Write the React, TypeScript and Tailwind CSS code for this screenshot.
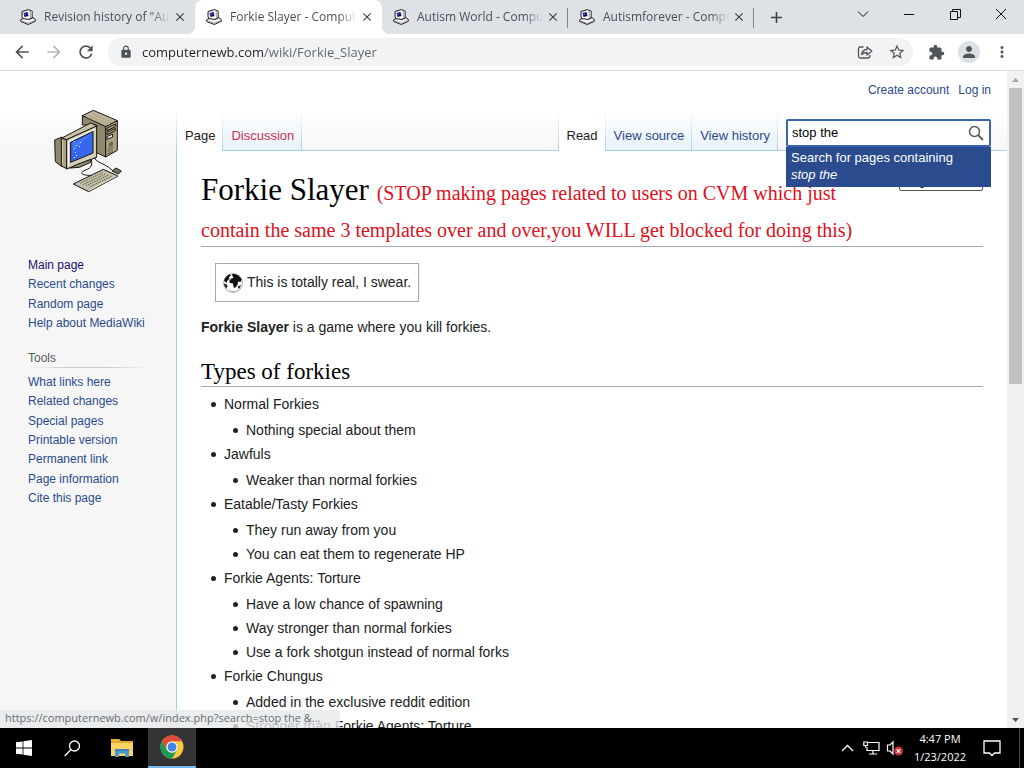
import React, { useState } from "react";
import {
  MdArrowBack,
  MdArrowForward,
  MdRefresh,
  MdLock,
  MdStarBorder,
  MdExtension,
  MdPerson,
  MdMoreVert,
  MdClose,
  MdAdd,
} from "react-icons/md";

function Favicon() {
  return (
    <svg width="16" height="16" viewBox="0 0 16 16" className="shrink-0" aria-hidden="true">
      <path d="M2 2.500L8.500.6l4 1.700v6l2.800 2.200v1.800l-7 3.200L.7 12.500v-1.700L3 9.500l-1-1.500z" fill="#f4f4f4" stroke="#1a1a1a" strokeWidth="1" strokeLinejoin="round" />
      <path d="M9.500 1.500l3 1v6l-2.500 1z" fill="#b4b4b4" />
      <path d="M3.500 4l4-1 1 4L4.500 8z" fill="#12126e" />
      <path d="M4.500 4.500H6v1.300H4.500z" fill="#6d74e0" />
      <path d="M2.500 9.500l6.500 1 4-2" fill="none" stroke="#222" strokeWidth="1.200" />
      <path d="M1.500 11.500L8.300 14l6.200-2.800v1.200l-6.200 2.700-6.800-2.600z" fill="#8e8e8e" />
    </svg>
  );
}

function BrowserTab({ title, active, divider }: { title: string; active?: boolean; divider?: boolean }) {
  return (
    <div
      className={
        active
          ? "relative flex h-full w-[187px] items-center rounded-t-lg bg-white pl-[11px] pr-[7px]"
          : "relative flex h-full w-[186px] items-center pl-[11px] pr-[7px]"
      }
    >
      {active && (
        <>
          <span className="absolute bottom-0 -left-2 size-2 bg-[radial-gradient(circle_at_0_0,transparent_8px,#fff_8px)]" />
          <span className="absolute bottom-0 -right-2 size-2 bg-[radial-gradient(circle_at_100%_0,transparent_8px,#fff_8px)]" />
        </>
      )}
      <Favicon />
      <span className="ml-2 flex-1 overflow-hidden whitespace-nowrap text-[12px] leading-4 text-[#4b4f54] [mask-image:linear-gradient(to_right,#000_85%,transparent)]">
        {title}
      </span>
      <button type="button" aria-label={"Close " + title} className="ml-0.5 flex size-4 items-center justify-center text-[#3c4043]">
        <MdClose size={14} />
      </button>
      {divider && <span className="absolute right-0 top-2 h-5 w-px bg-[#808387]" />}
    </div>
  );
}

function TabStrip() {
  return (
    <div className="flex h-[34px] items-stretch bg-[#dee1e6] pl-[9px]">
      <BrowserTab title={'Revision history of "Autism World"'} />
      <BrowserTab title="Forkie Slayer - Computernewb Wiki" active />
      <BrowserTab title="Autism World - Computernewb" divider />
      <BrowserTab title="Autismforever - Computernewb" divider />
      <button type="button" aria-label="New tab" className="ml-3 flex w-5 items-center justify-center text-[#3c4043]">
        <MdAdd size={19} />
      </button>
      <div className="ml-auto flex h-7 text-[#111]">
        <button type="button" aria-label="Search tabs" className="flex w-[46px] items-center justify-center">
          <svg width="12" height="8" viewBox="0 0 12 8" fill="none" stroke="currentColor"><path d="M1 1.500l5 5 5-5" /></svg>
        </button>
        <button type="button" aria-label="Minimize" className="flex w-[46px] items-center justify-center">
          <svg width="10" height="10" viewBox="0 0 10 10" fill="none" stroke="currentColor"><path d="M0 5.500h10" /></svg>
        </button>
        <button type="button" aria-label="Restore" className="flex w-[46px] items-center justify-center">
          <svg width="11" height="11" viewBox="0 0 11 11" fill="none" stroke="currentColor"><path d="M.5 2.500h7v8h-7zM2.500 2.500v-2h8v8h-3" /></svg>
        </button>
        <button type="button" aria-label="Close window" className="flex w-[46px] items-center justify-center">
          <svg width="12" height="12" viewBox="0 0 12 12" fill="none" stroke="currentColor"><path d="M1 1l10 10M11 1L1 11" /></svg>
        </button>
      </div>
    </div>
  );
}

function Toolbar() {
  const [url, setUrl] = useState("computernewb.com/wiki/Forkie_Slayer");
  return (
    <div className="flex h-[37px] items-center border-b border-[#d8dadd] bg-white px-3 text-[#505458]">
      <button type="button" aria-label="Back" className="flex w-5 justify-center"><MdArrowBack size={20} /></button>
      <button type="button" aria-label="Forward" className="ml-3 flex w-5 justify-center text-[#b4b6b9]"><MdArrowForward size={20} /></button>
      <button type="button" aria-label="Reload" className="ml-3 flex w-5 justify-center"><MdRefresh size={20} /></button>
      <div className="ml-3 flex h-7 flex-1 items-center rounded-full bg-[#f1f3f4] pl-[11px] pr-1.5">
        <MdLock size={14} />
        <input
          aria-label="Address and search bar"
          value={url}
          onChange={(e) => setUrl(e.target.value)}
          className="ml-[9px] min-w-0 flex-1 bg-[linear-gradient(to_right,#202124_121px,#5f6368_121px)] bg-clip-text text-[13px] leading-5 text-[#202124] outline-none [-webkit-text-fill-color:transparent]"
        />
        <button type="button" aria-label="Share" className="flex w-5 justify-center">
          <svg width="16" height="16" viewBox="0 0 16 16" fill="none" stroke="currentColor" strokeWidth="1.300" strokeLinejoin="round">
            <path d="M6.500 3H3.200A1.700 1.700 0 0 0 1.500 4.700v7.600A1.700 1.700 0 0 0 3.200 14h8a1.700 1.700 0 0 0 1.700-1.700V11" />
            <path d="M4.500 10.500C5 7.300 6.800 5.600 10 5.500V3l4.800 4-4.800 4V8.500c-2.500 0-4.200.6-5.500 2z" />
          </svg>
        </button>
        <button type="button" aria-label="Bookmark this page" className="ml-3 flex w-5 justify-center"><MdStarBorder size={18} /></button>
      </div>
      <button type="button" aria-label="Extensions" className="ml-[13px] flex w-5 justify-center"><MdExtension size={17} /></button>
      <button type="button" aria-label="Profile" className="ml-3 flex size-[22px] items-center justify-center rounded-full bg-[#dce0e5]"><MdPerson size={18} /></button>
      <button type="button" aria-label="Menu" className="ml-3 flex w-5 justify-center"><MdMoreVert size={18} /></button>
    </div>
  );
}

function WikiLogo() {
  const dots = [[132, 138], [138, 150], [132, 159], [135, 171], [147, 153], [138, 180], [132, 186], [150, 141]];
  return (
    <svg width="120" height="110" viewBox="0 0 360 330" role="img" aria-label="Computernewb Wiki">
      <g stroke="#17150f" strokeWidth="3" strokeLinejoin="round">
        <path d="M157 62L190 46L262 77L227 95z" fill="#bdb69a" />
        <path d="M157 62L227 95V186L198 172V90L157 90z" fill="#8f886c" />
        <path d="M227 95L262 77V166L227 186z" fill="#a8a184" />
        <path d="M74 135L96 126V215L76 200z" fill="#8f886b" />
        <path d="M94 130L182 84L202 93L110 134z" fill="#c9c2a6" />
        <path d="M94 130L110 134V221L94 213z" fill="#a8a183" />
        <path d="M110 134L200 93V187L110 222z" fill="#d3cdb6" />
        <path d="M122 142L189 109V174L122 202z" fill="#3568ed" />
        <path d="M120 219L140 209L180 194L182 202L148 217z" fill="#8f886b" />
        <path d="M130 267L220 223L264 243L176 290z" fill="#c4bfa8" />
        <path d="M246 228L258 219L274 228L265 237z" fill="#77736b" />
        <path d="M194 186C195 203 221 202 246 225M184 193C191 223 170 221 157 230C148 238 168 242 184 241" fill="none" />
      </g>
      <path d="M115 140L195 103M115 140V213" stroke="#fff" strokeWidth="3" fill="none" />
      <path d="M98 134V210" stroke="#d5ceb4" strokeWidth="3" />
      <path d="M128 145L180 120L128 170z" fill="#4f80f8" opacity=".6" />
      <path d="M169 66L236 96M178 62L245 92M189 57L251 85" stroke="#9d9679" strokeWidth="2" />
      <path d="M231 99L256 87V95L231 107zM231 112L256 100V107L231 119z" fill="#aaa489" stroke="#17150f" strokeWidth="3" />
      <path d="M231 125L248 117V126L231 133z" fill="#eee" stroke="#17150f" strokeWidth="3" />
      <path d="M238 145L247 141V150L238 154zM233 163L249 155M233 170L249 162M233 177L249 169" fill="#77715b" stroke="#625d49" strokeWidth="3" />
      <path d="M177 287L260 243" stroke="#fff9dc" strokeWidth="2" />
      <g stroke="#555142" strokeWidth="3" strokeDasharray="4 3">
        <path d="M151 265L219 232M159 269L229 235M168 272L238 239M178 276L246 243" />
      </g>
      {dots.map(([x, y]) => <rect key={x + "-" + y} x={x} y={y} width="3" height="3" fill="#dbe6ff" />)}
    </svg>
  );
}

const mainLinks = ["Main page", "Recent changes", "Random page", "Help about MediaWiki"];
const toolLinks = ["What links here", "Related changes", "Special pages", "Printable version", "Permanent link", "Page information", "Cite this page"];

function Sidebar() {
  return (
    <aside className="w-44 shrink-0 pt-6 text-[12px]">
      <a href="#main" className="ml-[30px] block"><WikiLogo /></a>
      <nav aria-label="Navigation" className="mt-[50px] pl-7">
        <ul className="grid h-[78px] auto-rows-fr items-center">
          {mainLinks.map((t, i) => (
            <li key={t} className="leading-4">
              <a href="#nav" className={i === 0 ? "text-[#21106b]" : "text-[#2a4b8d]"}>{t}</a>
            </li>
          ))}
        </ul>
      </nav>
      <nav aria-label="Tools" className="mt-[17px] pl-7">
        <h3 className="mr-7 leading-[17px] text-[#54595d]">Tools</h3>
        <div className="mr-7 h-px bg-[linear-gradient(to_right,transparent,#c8ccd1_33%,#c8ccd1_66%,transparent)]" />
        <ul className="mt-1 grid h-[136px] auto-rows-fr items-center">
          {toolLinks.map((t) => (
            <li key={t} className="leading-4"><a href="#tool" className="text-[#2a4b8d]">{t}</a></li>
          ))}
        </ul>
      </nav>
    </aside>
  );
}

function PageTab({ label, active, missing }: { label: string; active?: boolean; missing?: boolean }) {
  const base = "flex h-10 items-center border-r pl-2 pr-[7px] pt-3 [border-image:linear-gradient(to_bottom,#fff,#a9d0e2)_1] ";
  return (
    <li>
      <a
        href="#tab"
        className={
          base +
          (active
            ? "relative z-10 -mb-px h-[41px] bg-white pb-px text-[#202122]"
            : missing
              ? "bg-linear-to-b from-white to-[#e8f2f8] text-[#c9304f]"
              : "bg-linear-to-b from-white to-[#e8f2f8] text-[#2a4b8d]")
        }
      >
        {label}
      </a>
    </li>
  );
}

function SearchBox() {
  const [query, setQuery] = useState("stop the");
  return (
    <form className="relative mb-[3px] ml-2 mr-4 w-[205px]" onSubmit={(e) => e.preventDefault()}>
      <div className="flex h-7 items-center rounded-xs border-2 border-[#3a66b0] bg-white pl-1 pr-[5px]">
        <input
          aria-label="Search wiki"
          value={query}
          onChange={(e) => setQuery(e.target.value)}
          className="min-w-0 flex-1 text-[13px] text-black outline-none"
        />
        <button type="submit" aria-label="Search" className="text-[#54595d]">
          <svg width="16" height="16" viewBox="0 0 16 16" fill="none" stroke="currentColor" strokeWidth="1.500">
            <circle cx="6.500" cy="6.500" r="5" />
            <path d="M10 10l5 5" strokeWidth="1.800" />
          </svg>
        </button>
      </div>
      <a href="#search" className="absolute left-0 right-0 top-7 z-20 block border border-[#2a4b8d] bg-[#2a4b8d] px-1 pb-[3px] pt-px text-[13px] leading-[17px] text-white">
        <span className="block font-medium">Search for pages containing</span>
        <em className="block">{query}</em>
      </a>
    </form>
  );
}

const forkies: [string, string[]][] = [
  ["Normal Forkies", ["Nothing special about them"]],
  ["Jawfuls", ["Weaker than normal forkies"]],
  ["Eatable/Tasty Forkies", ["They run away from you", "You can eat them to regenerate HP"]],
  ["Forkie Agents: Torture", ["Have a low chance of spawning", "Way stronger than normal forkies", "Use a fork shotgun instead of normal forks"]],
  ["Forkie Chungus", ["Added in the exclusive reddit edition", "Stronger than Forkie Agents: Torture"]],
];

const bullet =
  "before:-ml-[13px] before:mr-2 before:mb-0.5 before:inline-block before:size-[5px] before:rounded-full before:bg-[#202122] before:content-['']";

function Globe() {
  return (
    <svg width="20" height="20" viewBox="0 0 20 20" className="shrink-0" aria-hidden="true">
      <circle cx="10" cy="10" r="9.400" fill="#fff" stroke="#aaa" strokeWidth="1" />
      <path d="M1 7.500C2 4 4.500 2 7 1.200l1 1.300-2 1.500.5 2-2 1.500-1.200 2.500z" fill="#111" />
      <path d="M9 1c4-.6 8 1.600 9.700 5.500l-1.200 2.500-2.500-.5-.5 3.500-2.500 3-1.500-1-.5-3.500-3-.5L6.200 8l2-2.500 2.300-.5L9.500 3z" fill="#111" />
      <path d="M1 10.500l2.500.8 1 2-1 2.200C2 14 1 12.500 1 10.500zM14.800 13.500l3-1.500c0 1.500-1 3-2.300 4z" fill="#222" />
      <path d="M5 17.200c3 .8 7 .8 10 0-2 2.300-8 2.300-10 0z" fill="#bbb" />
    </svg>
  );
}

function Article() {
  return (
    <main className="flex-1 border-l border-t border-[#a9d0e2] bg-white pl-6 pr-6 pt-5 text-[14px] text-[#202122]">
      <h1 className="border-b border-[#a2a9b1] pb-px font-['Liberation_Serif',serif] text-[31px] leading-[37px] text-black">
        <button type="button" className="float-right h-5 w-[84px] rounded-xs border border-[#555] bg-white pl-2 text-left font-['Liberation_Sans',sans-serif] text-[12px] leading-4">
          Sign in
        </button>
        Forkie Slayer{" "}
        <span className="text-[20px] leading-none text-[#e01020]">
          (STOP making pages related to users on CVM which just contain the same 3 templates over and over,you WILL get blocked for doing this)
        </span>
      </h1>
      <div className="ml-[14px] mt-4 flex h-[39px] w-fit items-center gap-1 border border-[#a2a9b1] px-[7px]">
        <Globe />
        <span>This is totally real, I swear.</span>
      </div>
      <p className="mt-[14px] leading-[22px]"><b>Forkie Slayer</b> is a game where you kill forkies.</p>
      <h2 className="mt-5 border-b border-[#a2a9b1] font-['Liberation_Serif',serif] text-[23px] leading-7 text-black">Types of forkies</h2>
      <ul className="mt-[5px] pl-[23px]">
        {forkies.map(([name, facts]) => (
          <li key={name} className={"leading-6 " + bullet}>
            {name}
            <ul className="pl-[22px] pt-0.5">
              {facts.map((f) => <li key={f} className={bullet}>{f}</li>)}
            </ul>
          </li>
        ))}
      </ul>
    </main>
  );
}

function Scrollbar() {
  return (
    <div className="flex w-[17px] shrink-0 flex-col items-center bg-[#f1f1f1]" aria-hidden="true">
      <svg width="17" height="17" viewBox="0 0 17 17"><path d="M5 11l3.500-4L12 11z" fill="#a3a3a3" /></svg>
      <div className="h-[45%] w-[13px] bg-[#c1c1c1]" />
      <svg width="17" height="17" viewBox="0 0 17 17" className="mt-auto"><path d="M5 7l3.500 4L12 7z" fill="#505050" /></svg>
    </div>
  );
}

function WikiPage() {
  return (
    <div className="relative flex min-h-0 flex-1 overflow-hidden bg-[#f6f6f6] font-['Liberation_Sans',Arial,sans-serif]">
      <div className="flex min-w-0 flex-1 bg-[linear-gradient(to_bottom,#fff_0,#fff_40px,#f6f6f6_80px)]">
        <Sidebar />
        <div className="flex min-w-0 flex-1 flex-col">
          <header className="flex h-[79px] shrink-0 flex-col text-[13px]">
            <div className="flex h-[39px] justify-end gap-[9px] pr-4 pt-[11px] text-[12px] leading-4 text-[#2a4b8d]">
              <a href="#create">Create account</a>
              <a href="#login">Log in</a>
            </div>
            <div className="flex h-10 items-end">
              <ul className="mr-auto flex items-start self-start border-l [border-image:linear-gradient(to_bottom,#fff,#a9d0e2)_1]">
                <PageTab label="Page" active />
                <PageTab label="Discussion" missing />
              </ul>
              <ul className="flex items-start self-start border-l [border-image:linear-gradient(to_bottom,#fff,#a9d0e2)_1]">
                <PageTab label="Read" active />
                <PageTab label="View source" />
                <PageTab label="View history" />
              </ul>
              <SearchBox />
            </div>
          </header>
          <Article />
        </div>
      </div>
      <Scrollbar />
      <div className="absolute bottom-0 left-0 h-[18px] w-[340px] overflow-hidden whitespace-nowrap rounded-tr-sm bg-[#e6e8eb]/80 pl-[5px] font-['Open_Sans','Noto_Sans',sans-serif] text-[11px] leading-4 text-[#696d72]">
        https://computernewb.com/w/index.php?search=stop the &amp;...
      </div>
    </div>
  );
}

function Taskbar() {
  return (
    <footer className="flex h-10 shrink-0 items-stretch bg-black text-white">
      <button type="button" aria-label="Start" className="flex w-12 items-center justify-center">
        <svg width="16" height="16" viewBox="0 0 16 16" fill="#fff"><path d="M0 2.300l6.600-.9v6.200H0zM7.400 1.300L16 0v7.600H7.400zM0 8.400h6.600v6.200L0 13.700zM7.400 8.400H16V16l-8.600-1.200z" /></svg>
      </button>
      <button type="button" aria-label="Search" className="flex w-12 items-center justify-center">
        <svg width="17" height="17" viewBox="0 0 17 17" fill="none" stroke="#fff" strokeWidth="1.300"><circle cx="10.500" cy="6" r="5" /><path d="M7 9.500L.7 16" /></svg>
      </button>
      <button type="button" aria-label="File Explorer" className="flex w-[52px] items-center justify-center">
        <svg width="22" height="20" viewBox="0 0 22 20">
          <path d="M0 1h8l2 2h12v15H0z" fill="#e2a72e" />
          <path d="M0 5h22v13H0z" fill="#f8d562" />
          <path d="M0 1h8l1.500 2H0z" fill="#edb63c" />
          <path d="M4 19v-8h14v8h-4v-3.500H8V19z" fill="#4a9ad4" />
          <path d="M4 11h14v2H4z" fill="#3a82bd" />
        </svg>
      </button>
      <button type="button" aria-label="Google Chrome" className="flex w-12 items-center justify-center border-b-2 border-[#76b9ed] bg-[#343436]">
        <svg width="24" height="24" viewBox="0 0 24 24">
          <circle cx="12" cy="12" r="11.500" fill="#f9cb3c" />
          <path d="M2.040 6.250A11.500 11.500 0 0 1 21.960 6.250H12A5.750 5.750 0 0 0 7.020 14.880z" fill="#de4b3e" />
          <path d="M2.040 6.250L7.020 14.880A5.750 5.750 0 0 0 16.980 14.880L12 23.500A11.500 11.500 0 0 1 2.040 6.250z" fill="#1a9a5a" />
          <circle cx="12" cy="12" r="5.600" fill="#fff" />
          <circle cx="12" cy="12" r="4.500" fill="#4285e8" />
        </svg>
      </button>
      <div className="ml-auto flex items-center font-['Open_Sans','Noto_Sans',sans-serif]">
        <button type="button" aria-label="Show hidden icons" className="flex w-6 justify-center">
          <svg width="13" height="8" viewBox="0 0 13 8" fill="none" stroke="#fff" strokeWidth="1.300"><path d="M1 7l5.500-5.500L12 7" /></svg>
        </button>
        <button type="button" aria-label="Network" className="flex w-6 justify-center">
          <svg width="17" height="14" viewBox="0 0 17 14" fill="none" stroke="#fff" strokeWidth="1.200"><path d="M5 1.500h11v8H4V6M.8 1h3.700v3.500H.8zM2.500 4.500v2M10 9.500V13M6 13h8" /></svg>
        </button>
        <button type="button" aria-label="Volume muted" className="flex w-6 justify-center">
          <svg width="18" height="16" viewBox="0 0 18 16">
            <path d="M1.500 5h2.500l3-3v12l-3-3H1.500z" fill="none" stroke="#fff" strokeWidth="1.200" />
            <circle cx="12.500" cy="11" r="4.500" fill="#c9303a" />
            <path d="M10.700 9.200l3.600 3.600M14.300 9.200l-3.600 3.600" stroke="#fff" strokeWidth="1.200" />
          </svg>
        </button>
        <div className="w-[66px] text-center text-[11px] leading-[18px]">
          <div>4:47 PM</div>
          <div>1/23/2022</div>
        </div>
        <button type="button" aria-label="Notifications" className="flex w-[38px] justify-center">
          <svg width="18" height="17" viewBox="0 0 18 17" fill="none" stroke="#fff" strokeWidth="1.300"><path d="M1 1h16v12h-5.500L9 15.500 6.500 13H1z" /></svg>
        </button>
        <div className="ml-2 mr-1 h-10 w-px bg-[#4a4a4a]" />
      </div>
    </footer>
  );
}

export default function App() {
  return (
    <div className="flex h-screen flex-col overflow-hidden font-['Open_Sans','Noto_Sans',sans-serif]">
      <TabStrip />
      <Toolbar />
      <WikiPage />
      <Taskbar />
    </div>
  );
}
